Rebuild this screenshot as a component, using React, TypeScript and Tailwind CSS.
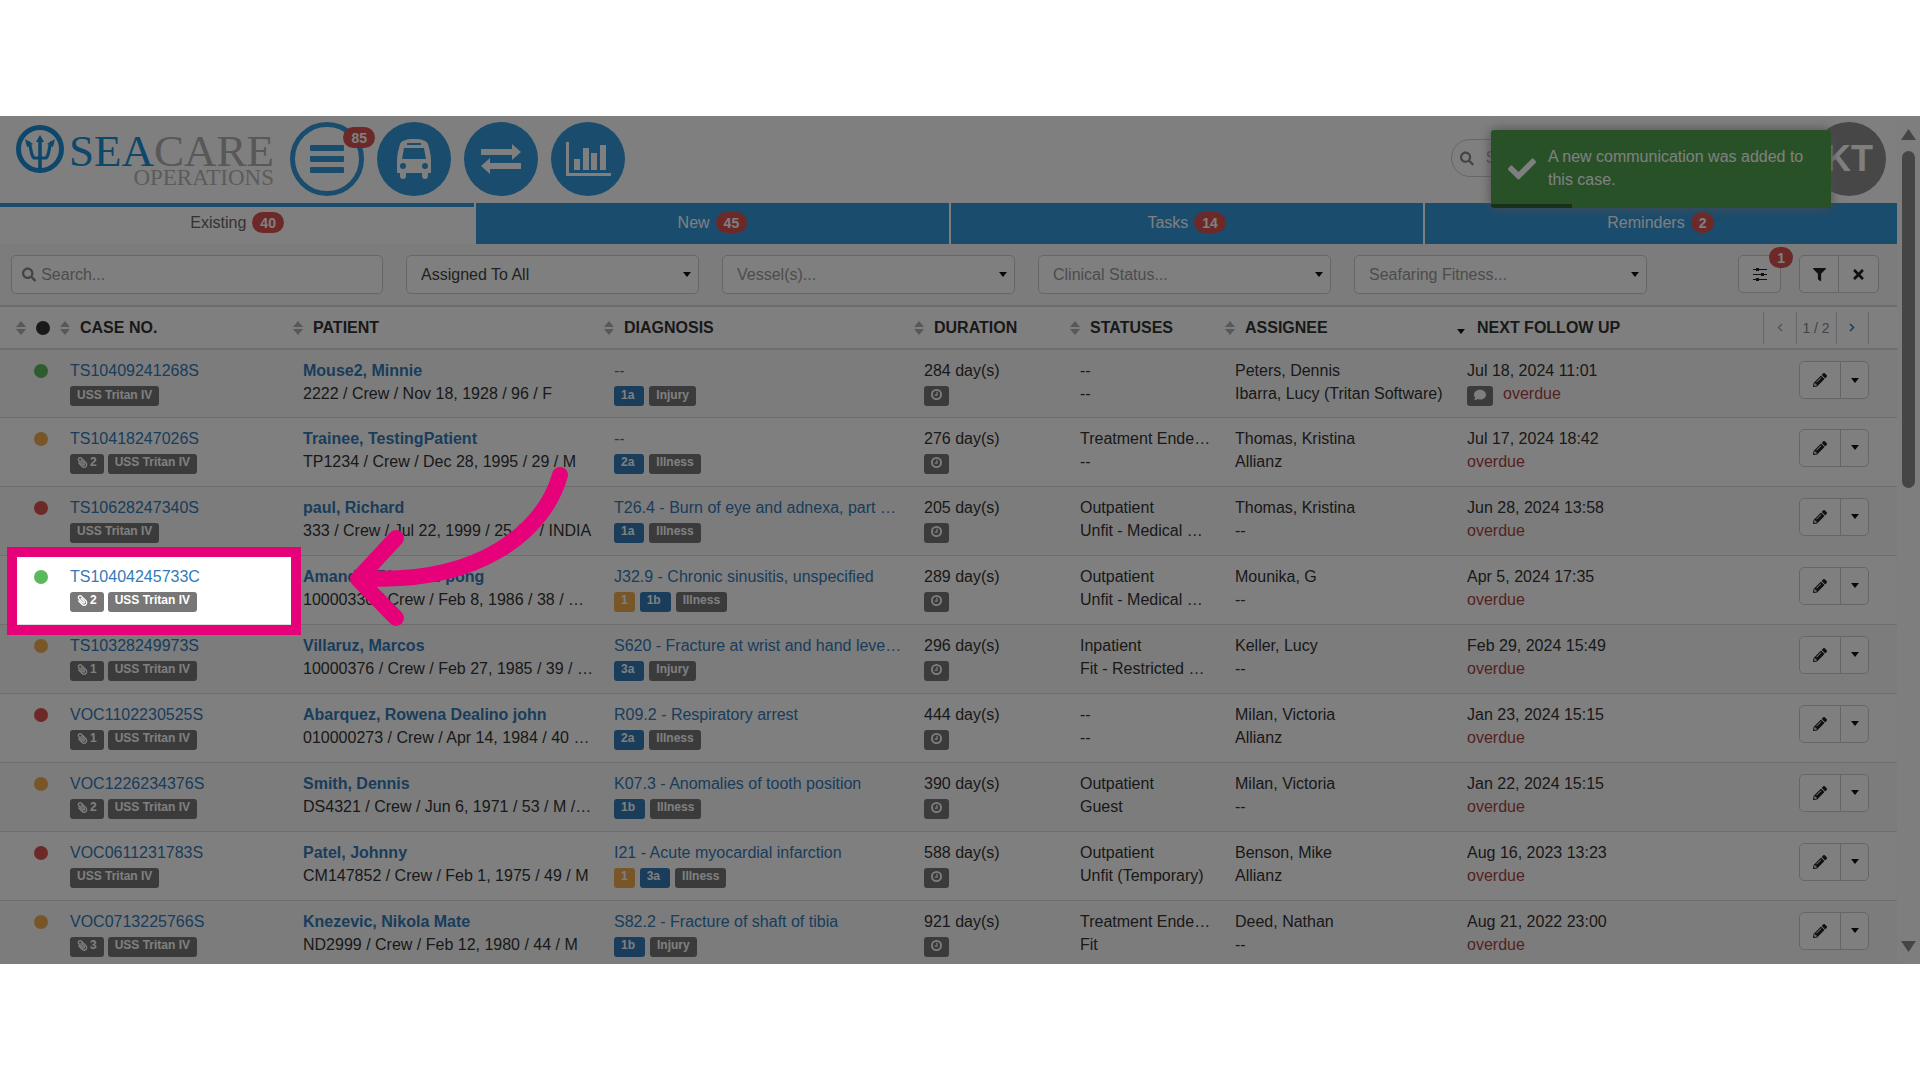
import React from 'react';
import { FaCheck, FaComment, FaFilter, FaPaperclip, FaPencilAlt, FaSearch, FaTimes } from 'react-icons/fa';

interface CaseRow {
    dot: 'green' | 'orange' | 'red';
    caseNo: string;
    files?: number;
    patient: string;
    details: string;
    diagnosis: string;
    alert?: string;
    grade: string;
    kind: string;
    days: number;
    status: string;
    fitness: string;
    assignee: string;
    company: string;
    followUp: string;
    comment?: boolean;
}

const rows: CaseRow[] = [
    { dot: 'green', caseNo: 'TS10409241268S', patient: 'Mouse2, Minnie', details: '2222 / Crew / Nov 18, 1928 / 96 / F', diagnosis: '--', grade: '1a', kind: 'Injury', days: 284, status: '--', fitness: '--', assignee: 'Peters, Dennis', company: 'Ibarra, Lucy (Tritan Software)', followUp: 'Jul 18, 2024 11:01', comment: true },
    { dot: 'orange', caseNo: 'TS10418247026S', files: 2, patient: 'Trainee, TestingPatient', details: 'TP1234 / Crew / Dec 28, 1995 / 29 / M', diagnosis: '--', grade: '2a', kind: 'Illness', days: 276, status: 'Treatment Ende…', fitness: '--', assignee: 'Thomas, Kristina', company: 'Allianz', followUp: 'Jul 17, 2024 18:42' },
    { dot: 'red', caseNo: 'TS10628247340S', patient: 'paul, Richard', details: '333 / Crew / Jul 22, 1999 / 25 / F / INDIA', diagnosis: 'T26.4 - Burn of eye and adnexa, part …', grade: '1a', kind: 'Illness', days: 205, status: 'Outpatient', fitness: 'Unfit - Medical …', assignee: 'Thomas, Kristina', company: '--', followUp: 'Jun 28, 2024 13:58' },
    { dot: 'green', caseNo: 'TS10404245733C', files: 2, patient: 'Amando, Ritchard pong', details: '10000330 / Crew / Feb 8, 1986 / 38 / …', diagnosis: 'J32.9 - Chronic sinusitis, unspecified', alert: '1', grade: '1b', kind: 'Illness', days: 289, status: 'Outpatient', fitness: 'Unfit - Medical …', assignee: 'Mounika, G', company: '--', followUp: 'Apr 5, 2024 17:35' },
    { dot: 'orange', caseNo: 'TS10328249973S', files: 1, patient: 'Villaruz, Marcos', details: '10000376 / Crew / Feb 27, 1985 / 39 / …', diagnosis: 'S620 - Fracture at wrist and hand leve…', grade: '3a', kind: 'Injury', days: 296, status: 'Inpatient', fitness: 'Fit - Restricted …', assignee: 'Keller, Lucy', company: '--', followUp: 'Feb 29, 2024 15:49' },
    { dot: 'red', caseNo: 'VOC1102230525S', files: 1, patient: 'Abarquez, Rowena Dealino john', details: '010000273 / Crew / Apr 14, 1984 / 40 …', diagnosis: 'R09.2 - Respiratory arrest', grade: '2a', kind: 'Illness', days: 444, status: '--', fitness: '--', assignee: 'Milan, Victoria', company: 'Allianz', followUp: 'Jan 23, 2024 15:15' },
    { dot: 'orange', caseNo: 'VOC1226234376S', files: 2, patient: 'Smith, Dennis', details: 'DS4321 / Crew / Jun 6, 1971 / 53 / M /…', diagnosis: 'K07.3 - Anomalies of tooth position', grade: '1b', kind: 'Illness', days: 390, status: 'Outpatient', fitness: 'Guest', assignee: 'Milan, Victoria', company: '--', followUp: 'Jan 22, 2024 15:15' },
    { dot: 'red', caseNo: 'VOC0611231783S', patient: 'Patel, Johnny', details: 'CM147852 / Crew / Feb 1, 1975 / 49 / M', diagnosis: 'I21 - Acute myocardial infarction', alert: '1', grade: '3a', kind: 'Illness', days: 588, status: 'Outpatient', fitness: 'Unfit (Temporary)', assignee: 'Benson, Mike', company: 'Allianz', followUp: 'Aug 16, 2023 13:23' },
    { dot: 'orange', caseNo: 'VOC0713225766S', files: 3, patient: 'Knezevic, Nikola Mate', details: 'ND2999 / Crew / Feb 12, 1980 / 44 / M', diagnosis: 'S82.2 - Fracture of shaft of tibia', grade: '1b', kind: 'Injury', days: 921, status: 'Treatment Ende…', fitness: 'Fit', assignee: 'Deed, Nathan', company: '--', followUp: 'Aug 21, 2022 23:00' },
];

const dotColors = {
    green: 'bg-[#5cb85c]',
    orange: 'bg-[#f0ad4e]',
    red: 'bg-[#d9534f]',
};

const tabs = [
    { label: 'Existing', count: 40 },
    { label: 'New', count: 45 },
    { label: 'Tasks', count: 14 },
    { label: 'Reminders', count: 2 },
];

const filters = [
    { label: 'Assigned To All', color: 'text-[#444]' },
    { label: 'Vessel(s)...', color: 'text-[#999]' },
    { label: 'Clinical Status...', color: 'text-[#999]' },
    { label: 'Seafaring Fitness...', color: 'text-[#999]' },
];

const columns = ['CASE NO.', 'PATIENT', 'DIAGNOSIS', 'DURATION', 'STATUSES', 'ASSIGNEE'];

const SortIcon = () => (
    <svg width="10" height="14" viewBox="0 0 10 14" fill="#b0b0b0" className="shrink-0">
        <path d="M5 0l5 6H0zM5 14l5-6H0z" />
    </svg>
);

const Caret = () => (
    <svg width="8" height="5" viewBox="0 0 8 5" fill="#111" className="shrink-0">
        <path d="M0 0h8L4 5z" />
    </svg>
);

const ClockIcon = () => (
    <svg width="11" height="11" viewBox="0 0 12 12" fill="none" stroke="#fff">
        <circle cx="6" cy="6" r="5" strokeWidth="2" />
        <path d="M6.500 3v3.700H4" strokeWidth="1.300" />
    </svg>
);

const Badge = ({ children }: { children: React.ReactNode }) => (
    <span className="inline-flex h-[21px] items-center rounded-full bg-[#d9534f] px-2 text-[14px] font-bold leading-none text-white">{children}</span>
);

const Label = ({ className = 'bg-[#777]', children }: { className?: string; children: React.ReactNode }) => (
    <span className={`inline-flex h-5 items-center rounded-[3px] px-[7px] pb-[3px] text-[12px] leading-none font-bold text-white ${className}`}>{children}</span>
);

const Logo = () => (
    <div className="flex w-[258px] shrink-0 pt-[3px]">
        <svg width="48" height="48" viewBox="0 0 48 48" fill="none" stroke="#1a8ed6" className="shrink-0">
            <circle cx="24" cy="24" r="21.5" strokeWidth="5" />
            <path d="M24 15v28" strokeWidth="3.600" />
            <path d="M12 17c4 4 2 13 6 16h12c4-3 2-12 6-16" strokeWidth="3.200" />
            <path d="M24 10l4 7h-8zM9 14l8 5-6 3zM39 14l-8 5 6 3z" fill="#1a8ed6" stroke="none" />
        </svg>
        <div className="flex flex-1 flex-col items-end whitespace-nowrap font-['Liberation_Serif',serif]">
            <span className="pt-2 text-[45px] leading-9 text-[#b0b0b0]"><span className="text-[#1a8ed6]">SEA</span>CARE</span>
            <span className="text-[23px] leading-[18px] text-[#b8b8b8]">OPERATIONS</span>
        </div>
    </div>
);

const BusIcon = () => (
    <svg width="34" height="40" viewBox="0 0 34 40" fill="#fff" fillRule="evenodd">
        <path d="M17 0c8 0 13 2 14 5 1 4 3 10 3 16v13h-3v3a3 3 0 0 1-6 0v-3H9v3a3 3 0 0 1-6 0v-3H0V21C0 15 2 9 3 5 4 2 9 0 17 0zM10 4v2h14V4zM7 9L5 20h24L27 9zM6 24a3 3 0 1 0 0 6 3 3 0 0 0 0-6zM28 24a3 3 0 1 0 0 6 3 3 0 0 0 0-6z" />
    </svg>
);

const ExchangeIcon = () => (
    <svg width="40" height="30" viewBox="0 0 40 30" fill="#fff">
        <path d="M0 5h31V0l9 8-9 8v-5H0zM40 19H9v-5l-9 8 9 8v-5h31z" />
    </svg>
);

const ChartIcon = () => (
    <svg width="45" height="34" viewBox="0 0 45 34" fill="#fff">
        <path d="M0 0h3v31h42v3H0zM8 17h6v11H8zM17 6h6v22h-6zM25 11h6v17h-6zM34 3h6v25h-6z" />
    </svg>
);

const Header = () => (
    <header className="flex h-[87px] items-start pl-4 pr-[11px] pt-[6px]">
        <Logo />
        <nav className="ml-4 flex gap-[13px]">
            <button aria-label="Cases" className="relative flex h-[74px] w-[74px] items-center justify-center rounded-full border-[5px] border-[#3498db]">
                <svg width="34" height="28" viewBox="0 0 34 28" fill="#3498db">
                    <rect width="34" height="6" rx="1" />
                    <rect y="11" width="34" height="6" rx="1" />
                    <rect y="22" width="34" height="6" rx="1" />
                </svg>
                <span className="absolute -right-4 top-0 flex"><Badge>85</Badge></span>
            </button>
            <button aria-label="Transport" className="flex h-[74px] w-[74px] items-center justify-center rounded-full bg-[#3498db]"><BusIcon /></button>
            <button aria-label="Transfers" className="flex h-[74px] w-[74px] items-center justify-center rounded-full bg-[#3498db]"><ExchangeIcon /></button>
            <button aria-label="Reports" className="flex h-[74px] w-[74px] items-center justify-center rounded-full bg-[#3498db]"><ChartIcon /></button>
        </nav>
        <label className="ml-auto mt-[17px] flex h-[38px] w-[340px] items-center gap-3 rounded-full border border-[#ccc] px-2 text-[#888]">
            <FaSearch size={15} />
            <input aria-label="Search all" placeholder="Search..." className="w-full min-w-0 outline-none placeholder:text-[#999]" />
        </label>
        <button className="ml-[21px] h-[74px] w-[74px] shrink-0 rounded-full bg-[#8e8e8e] text-4xl font-bold text-white">KT</button>
    </header>
);

const Tabs = () => (
    <nav className="grid h-[41px] grid-cols-4">
        {tabs.map((tab, i) => (
            <button
                key={tab.label}
                className={`flex items-start justify-center gap-[6px] leading-[21px]
                    ${i === 0
                        ? 'border-t-4 border-[#3498db] bg-white pt-[5px] text-[#666]'
                        : 'border-l-2 border-white bg-[#3498db] pt-[9px] text-white'
                    }`}
            >
                {tab.label} <Badge>{tab.count}</Badge>
            </button>
        ))}
    </nav>
);

const FilterBar = () => (
    <div className="flex h-[63px] items-start gap-[23px] border-b-2 border-[#dadada] bg-[#f8f8f8] pl-[11px] pr-[18px] pt-[11px]">
        <label className="flex h-[39px] w-[372px] items-center gap-[5px] rounded-[5px] border border-[#ccc] bg-white px-[10px] text-[#888]">
            <FaSearch size={15} />
            <input aria-label="Search cases" placeholder="Search..." className="w-full outline-none placeholder:text-[#999]" />
        </label>
        {filters.map(filter => (
            <div key={filter.label} className="relative w-[293px]">
                <select aria-label={filter.label} className={`h-[39px] w-full appearance-none rounded-[5px] border border-[#ccc] bg-white px-[14px] ${filter.color}`}>
                    <option>{filter.label}</option>
                </select>
                <span className="pointer-events-none absolute right-2 top-[17px]"><Caret /></span>
            </div>
        ))}
        <div className="ml-auto flex gap-[18px]">
            <button aria-label="Columns" className="relative flex h-[38px] w-[43px] items-center justify-center rounded-[5px] border border-[#ccc] bg-white">
                <svg width="14" height="13" viewBox="0 0 14 13" fill="#222">
                    <path d="M0 1h14v1H0zM0 6h14v1H0zM0 11h14v1H0zM3 0h3v3H3zM8 5h3v3H8zM3 10h3v3H3z" />
                </svg>
                <span className="absolute -right-[13px] -top-[9px] flex"><Badge>1</Badge></span>
            </button>
            <div className="flex h-[38px] rounded-[5px] border border-[#ccc] bg-white text-[#222]">
                <button aria-label="Filter" className="flex w-[39px] items-center justify-center border-r border-[#ccc]"><FaFilter size={13} /></button>
                <button aria-label="Clear" className="flex w-[39px] items-center justify-center"><FaTimes size={15} /></button>
            </div>
        </div>
    </div>
);

const TableHead = () => (
    <thead>
        <tr className="h-[42px] border-b-2 border-[#dadada] text-left text-[#333]">
            <th className="pl-4">
                <span className="flex items-center gap-[10px]">
                    <SortIcon />
                    <span className="h-[14px] w-[14px] rounded-full bg-[#333]" />
                </span>
            </th>
            {columns.map(column => (
                <th key={column}>
                    <span className="flex items-center gap-[10px]"><SortIcon />{column}</span>
                </th>
            ))}
            <th>
                <span className="flex items-center gap-[10px]">
                    <span className="flex w-[10px] pt-2"><Caret /></span>NEXT FOLLOW UP
                </span>
            </th>
            <th className="pr-[28px] font-normal">
                <div className="ml-auto flex h-8 w-[106px] border-x border-[#ccc] text-center text-sm text-[#888]">
                    <button aria-label="Previous page" className="flex flex-1 items-center justify-center text-[#aaa]">
                        <svg width="6" height="9" viewBox="0 0 6 9" fill="none" stroke="currentColor" strokeWidth="1.500"><path d="M5 1L1.500 4.500 5 8" /></svg>
                    </button>
                    <span className="w-[41px] border-x border-[#ccc] leading-8">1 / 2</span>
                    <button aria-label="Next page" className="flex flex-1 items-center justify-center text-[#337ab7]">
                        <svg width="6" height="9" viewBox="0 0 6 9" fill="none" stroke="currentColor" strokeWidth="1.500"><path d="M1 1l3.500 3.500L1 8" /></svg>
                    </button>
                </div>
            </th>
        </tr>
    </thead>
);

const Row = ({ row }: { row: CaseRow }) => (
    <tr className="h-[69px] border-b border-[#ddd] align-top leading-[23px] whitespace-nowrap text-[#333] first:h-[68px] odd:bg-[#f9f9f9]">
        <td className="pl-[34px] pt-[14px]"><span className={`block h-[14px] w-[14px] rounded-full ${dotColors[row.dot]}`} /></td>
        <td className="pl-[10px] pt-[9px]">
            <a href="#case" className="block text-[#337ab7]">{row.caseNo}</a>
            <div className="flex gap-1 pt-1">
                {row.files && <Label><FaPaperclip size={11} className="mr-[2px] -scale-x-100" />{row.files}</Label>}
                <Label>USS Tritan IV</Label>
            </div>
        </td>
        <td className="pl-[10px] pt-[9px]">
            <a href="#patient" className="block font-bold text-[#337ab7]">{row.patient}</a>
            {row.details}
        </td>
        <td className="pl-[10px] pt-[9px]">
            <a href="#diagnosis" className="block text-[#337ab7]">{row.diagnosis}</a>
            <div className="flex gap-[5px] pt-1">
                {row.alert && <Label className="bg-[#f0ad4e]">{row.alert}</Label>}
                <Label className="bg-[#337ab7] pr-[10px]">{row.grade}</Label>
                <Label>{row.kind}</Label>
            </div>
        </td>
        <td className="pl-[10px] pt-[9px]">
            {row.days} day(s)
            <div className="flex pt-1"><Label><ClockIcon /></Label></div>
        </td>
        <td className="pl-[10px] pt-[9px]">{row.status}<br />{row.fitness}</td>
        <td className="pl-[10px] pt-[9px]">{row.assignee}<br />{row.company}</td>
        <td className="pl-[10px] pt-[9px]">
            {row.followUp}
            <div className="flex gap-[10px] text-[#a94442]">
                {row.comment && <span className="flex pt-1"><Label><FaComment size={12} /></Label></span>}
                overdue
            </div>
        </td>
        <td className="pr-[28px] pt-[11px]">
            <div className="ml-auto flex h-[38px] w-[70px] rounded-[5px] border border-[#ccc] bg-white text-[#222]">
                <button aria-label="Edit" className="flex flex-1 items-center justify-center border-r border-[#ccc]"><FaPencilAlt size={14} /></button>
                <button aria-label="More" className="flex w-[27px] items-center justify-center"><Caret /></button>
            </div>
        </td>
    </tr>
);

const Toast = () => (
    <div role="status" className="absolute right-[89px] top-[14px] flex h-[78px] w-[340px] items-start gap-3 overflow-hidden rounded-[3px] bg-[#51a351] pl-[17px] pr-5 pt-[15px] leading-[23px] text-white shadow-[0_0_12px_#999]">
        <FaCheck size={28} className="mt-[10px] shrink-0" />
        <p>A new communication was added to this case.</p>
        <div className="absolute bottom-0 left-0 h-1 w-[81px] bg-black/40" />
    </div>
);

const Scrollbar = () => (
    <div className="flex w-[23px] shrink-0 flex-col items-center bg-[#fcfcfc] pb-[12px] pt-[13px]">
        <svg width="15" height="11" viewBox="0 0 15 11" fill="#8b8b8b"><path d="M7.500 0L15 11H0z" /></svg>
        <div className="mt-[11px] h-[337px] w-[13px] rounded-full bg-[#8b8b8b]" />
        <svg width="15" height="11" viewBox="0 0 15 11" fill="#8b8b8b" className="mt-auto"><path d="M0 0h15L7.500 11z" /></svg>
    </div>
);

// dims everything but the highlighted case and points at it
const Spotlight = () => (
    <>
        <div className="pointer-events-none absolute left-[7px] top-[431px] h-[88px] w-[294px] border-[10px] border-[#e6007a] shadow-[0_0_0_9999px_rgba(0,0,0,0.5)]" />
        <svg width="240" height="180" viewBox="340 460 240 180" fill="none" stroke="#e6007a" strokeWidth="16" strokeLinecap="round" strokeLinejoin="round" className="pointer-events-none absolute left-[340px] top-[344px]">
            <path d="M560 475C545 530 480 585 362 578M396 538L358 579L396 618" />
        </svg>
    </>
);

export default function App() {
    return (
        <div className="flex h-screen flex-col bg-white py-[116px] font-['Liberation_Sans',Arial,sans-serif] text-base">
            <main className="relative flex min-h-0 flex-1 overflow-hidden">
                <div className="min-w-0 flex-1">
                    <Header />
                    <Tabs />
                    <FilterBar />
                    <table className="w-full table-fixed border-collapse">
                        <colgroup>
                            <col className="w-[60px]" />
                            <col className="w-[233px]" />
                            <col className="w-[311px]" />
                            <col className="w-[310px]" />
                            <col className="w-[156px]" />
                            <col className="w-[155px]" />
                            <col className="w-[232px]" />
                            <col className="w-[200px]" />
                            <col />
                        </colgroup>
                        <TableHead />
                        <tbody>
                            {rows.map(row => <Row key={row.caseNo} row={row} />)}
                        </tbody>
                    </table>
                </div>
                <Scrollbar />
                <Toast />
                <Spotlight />
            </main>
        </div>
    );
}
